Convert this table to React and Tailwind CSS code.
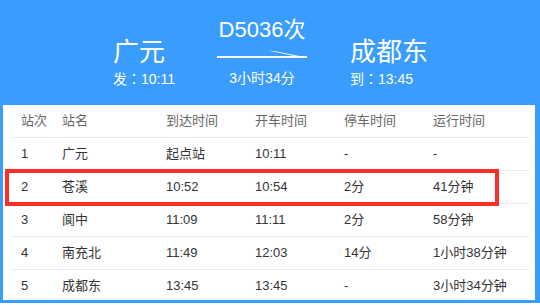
import React from 'react';

const FONT = "font-['Liberation_Sans','Noto_Sans_CJK_SC',sans-serif]";

const stops = [
  { no: '1', name: '广元', arrive: '起点站', depart: '10:11', stay: '-', run: '-' },
  { no: '2', name: '苍溪', arrive: '10:52', depart: '10:54', stay: '2分', run: '41分钟', hot: true },
  { no: '3', name: '阆中', arrive: '11:09', depart: '11:11', stay: '2分', run: '58分钟' },
  { no: '4', name: '南充北', arrive: '11:49', depart: '12:03', stay: '14分', run: '1小时38分钟' },
  { no: '5', name: '成都东', arrive: '13:45', depart: '13:45', stay: '-', run: '3小时34分钟' },
];

// one table line; the same column widths for header and body
const Row = ({ cells, head, hot }) => (
  <div className={`relative flex items-center h-[33px] shrink-0 border-b border-[#ececec] pl-[10px] text-[13px] ${head ? 'text-[#666]' : 'text-[#333]'}`}>
    <span className="w-[41px]">{cells[0]}</span>
    <span className="w-[104px]">{cells[1]}</span>
    <span className="w-[89px]">{cells[2]}</span>
    <span className="w-[89px]">{cells[3]}</span>
    <span className="w-[89px]">{cells[4]}</span>
    <span className="flex-1">{cells[5]}</span>
    {hot && (
      <div className="absolute -left-[6px] -top-[2px] w-[494px] h-[37px] border-4 border-[#f9302a]" />
    )}
  </div>
);

const TrainArrow = () => (
  <svg width="90" height="8" viewBox="0 0 90 8" className="block">
    <rect x="0" y="6" width="90" height="2" fill="#fff" />
    <polygon points="51,0.5 58,1.2 90,7.5 84,7.5" fill="#fff" />
  </svg>
);

// full-width colon, centred like the original's UI font
const Colon = () => <span className="font-['Noto_Sans_CJK_TC',sans-serif]">：</span>;

export default function App() {
  return (
    <div className={`w-[540px] h-[305px] bg-white ${FONT}`}>
      <div className="h-[303px] bg-[#3a9dfd] pl-[3px] pr-[5px] pb-[3px] flex flex-col">
        {/* Header */}
        <div className="h-[105px] shrink-0 flex items-start pl-[110px] text-white">
          <div className="w-[104px] flex flex-col pt-[39px]">
            <span className="text-[26px] leading-none">广元</span>
            <span className="mt-[6px] text-[14px] leading-none">发<Colon />10:11</span>
          </div>
          <div className="w-[90px] flex flex-col items-center pt-[19px]">
            <span className="text-[22px] leading-none">D5036次</span>
            <div className="mt-[9px]">
              <TrainArrow />
            </div>
            <span className="mt-[13px] text-[14px] leading-none">3小时34分</span>
          </div>
          <div className="ml-[43px] flex flex-col pt-[39px]">
            <span className="text-[26px] leading-none">成都东</span>
            <span className="mt-[6px] text-[14px] leading-none">到<Colon />13:45</span>
          </div>
        </div>

        {/* Table */}
        <div className="flex-1 bg-white overflow-hidden">
          <div className="ml-[8px] mr-[6px] flex flex-col">
            <Row head cells={['站次', '站名', '到达时间', '开车时间', '停车时间', '运行时间']} />
            {stops.map((s) => (
              <Row key={s.no} hot={s.hot} cells={[s.no, s.name, s.arrive, s.depart, s.stay, s.run]} />
            ))}
          </div>
        </div>
      </div>
    </div>
  );
}
